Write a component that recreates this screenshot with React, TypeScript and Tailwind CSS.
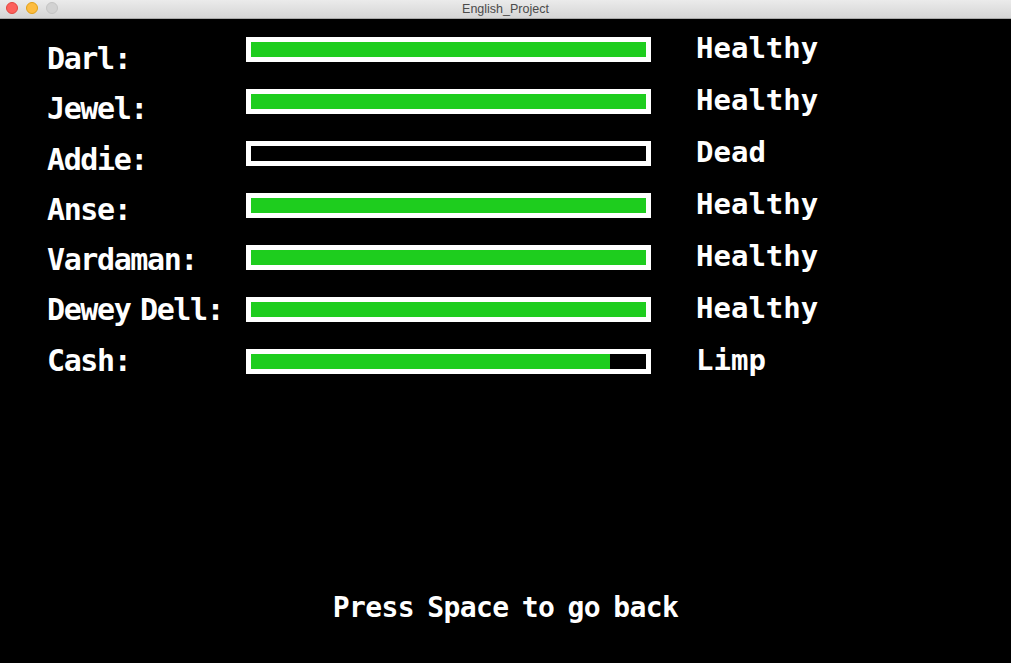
import React from "react";

type Member = { name: string; health: number; status: string };

const family: Member[] = [
  { name: "Darl:", health: 100, status: "Healthy" },
  { name: "Jewel:", health: 100, status: "Healthy" },
  { name: "Addie:", health: 0, status: "Dead" },
  { name: "Anse:", health: 100, status: "Healthy" },
  { name: "Vardaman:", health: 100, status: "Healthy" },
  { name: "Dewey Dell:", health: 100, status: "Healthy" },
  { name: "Cash:", health: 91, status: "Limp" },
];

const pixelFont = { fontFamily: '"DejaVu Sans Mono", "Liberation Mono", monospace' };

const HealthBar = ({ health }: { health: number }) => (
  <div className="h-[25px] w-[405px] border-[5px] border-white bg-black">
    <div className="h-full bg-[#1ecd1e]" style={{ width: `${health}%` }} />
  </div>
);

export default function App() {
  return (
    <div className="flex h-[663px] w-[1011px] flex-col overflow-hidden bg-black">
      {/* window chrome */}
      <div className="relative flex h-[19px] shrink-0 items-center justify-center border-b border-[#a9a9a9] bg-gradient-to-b from-[#ebebeb] to-[#d5d5d5]">
        <div className="absolute left-[6px] top-[2px] flex gap-[8px]">
          <span className="h-[12px] w-[12px] rounded-full border border-[#e2463f] bg-[#fc605c]" />
          <span className="h-[12px] w-[12px] rounded-full border border-[#e1a116] bg-[#fdbc40]" />
          <span className="h-[12px] w-[12px] rounded-full border border-[#c4c4c4] bg-[#d2d2d2]" />
        </div>
        <span className="font-['Liberation_Sans',sans-serif] text-[12.5px] leading-none text-[#4b4b4b]">
          English_Project
        </span>
      </div>

      <div className="flex flex-1 flex-col text-white" style={pixelFont}>
        <div className="flex pl-[47px]">
          {/* names */}
          <div className="flex w-[199px] flex-col pt-[15px]">
            {family.map((m) => (
              <div
                key={m.name}
                className="h-[50.3px] whitespace-nowrap text-[30px] font-bold leading-[50.3px] tracking-[-1.4px] [word-spacing:-7px]"
              >
                {m.name}
              </div>
            ))}
          </div>

          {/* bars + status */}
          <div className="flex flex-col pt-[18px]">
            {family.map((m) => (
              <div key={m.name} className="flex h-[52px] items-start">
                <HealthBar health={m.health} />
                <span className="ml-[45px] text-[29px] font-bold leading-[22px]">
                  {m.status}
                </span>
              </div>
            ))}
          </div>
        </div>

        <div className="mt-auto pb-[41px] text-center text-[28px] font-bold leading-[28px] tracking-[-0.6px] [word-spacing:-3px]">
          Press Space to go back
        </div>
      </div>
    </div>
  );
}
